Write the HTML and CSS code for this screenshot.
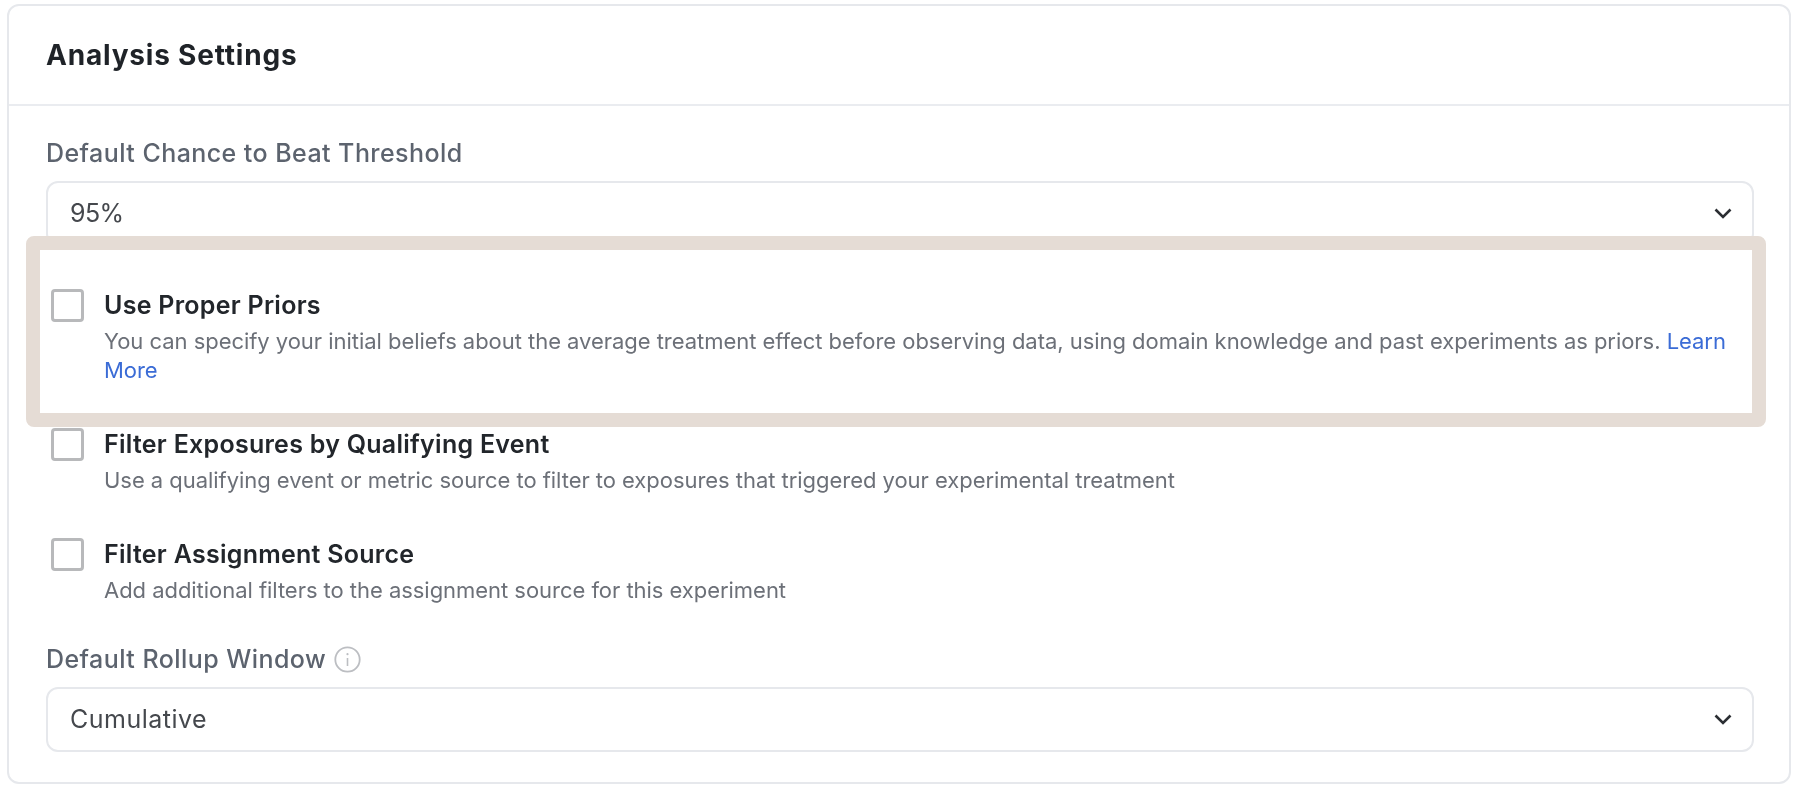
FILE: index.html
```html
<!DOCTYPE html>
<html>
<head>
  <meta charset="utf-8">
  <meta name="viewport" content="width=device-width, initial-scale=1">
  <title>Analysis Settings</title>
  <link rel="stylesheet" href="styles.css">
</head>
<body>
  <div class="card">
    <div class="cardHeader">
      <h2 class="cardTitle">Analysis Settings</h2>
    </div>
    <div class="cardBody">
      <div class="fieldLabel">Default Chance to Beat Threshold</div>
      <div class="selectBox">
        <span class="numValue">95%</span>
        <svg class="chevron" viewBox="0 0 18 11" width="18" height="11"><path d="M1.5 1.5L9 9l7.5-7.5" fill="none" stroke="#2b2e33" stroke-width="2.6"/></svg>
      </div>

      <div class="highlight">
        <div class="checkRow">
          <span class="checkBox"></span>
          <div class="checkText">
            <div class="checkTitle">Use Proper Priors</div>
            <div class="checkDesc">You can specify your initial beliefs about the average treatment effect before observing data, using domain knowledge and past experiments as priors. <a href="#" class="learnLink">Learn More</a></div>
          </div>
        </div>
      </div>

      <div class="checkRow afterHighlight">
        <span class="checkBox"></span>
        <div class="checkText">
          <div class="checkTitle">Filter Exposures by Qualifying Event</div>
          <div class="checkDesc">Use a qualifying event or metric source to filter to exposures that triggered your experimental treatment</div>
        </div>
      </div>

      <div class="checkRow lastCheck">
        <span class="checkBox"></span>
        <div class="checkText">
          <div class="checkTitle">Filter Assignment Source</div>
          <div class="checkDesc">Add additional filters to the assignment source for this experiment</div>
        </div>
      </div>

      <div class="fieldLabel withIcon">
        Default Rollup Window
        <svg class="infoIcon" viewBox="0 0 27 27" width="27" height="27">
          <circle cx="13.5" cy="13.5" r="12.2" fill="none" stroke="#bcbec2" stroke-width="1.8"/>
          <path d="M13.5 12v8" stroke="#bcbec2" stroke-width="1.6"/>
          <circle cx="13.5" cy="8.2" r="1.1" fill="#bcbec2"/>
        </svg>
      </div>
      <div class="selectBox">
        <span>Cumulative</span>
        <svg class="chevron" viewBox="0 0 18 11" width="18" height="11"><path d="M1.5 1.5L9 9l7.5-7.5" fill="none" stroke="#2b2e33" stroke-width="2.6"/></svg>
      </div>
    </div>
  </div>
</body>
</html>
```

FILE: styles.css
```css
body {
  margin: 0;
  padding: 4px 7px 0;
  background-color: #fff;
  font-family: Inter, "Liberation Sans", sans-serif;
}

.card {
  border: 2px solid #e6e8ec;
  border-radius: 12px;
  background-color: #fff;
  filter: blur(0.4px);
}

.cardHeader {
  display: flex;
  align-items: center;
  height: 98px;
  padding: 0 37px;
  border-bottom: 2px solid #eaecf0;
}

.cardTitle {
  margin: 0;
  font-size: 28px;
  font-weight: 650;
  letter-spacing: 0.8px;
  color: #1f2328;
}

.cardBody {
  padding: 31px 35px 30px 37px;
}

.fieldLabel {
  height: 32px;
  margin-bottom: 12px;
  font-size: 25px;
  line-height: 32px;
  font-weight: 500;
  letter-spacing: 0.44px;
  color: #5c636e;
}

.withIcon {
  display: flex;
  align-items: center;
  gap: 8px;
}

.selectBox {
  display: flex;
  align-items: center;
  justify-content: space-between;
  box-sizing: border-box;
  height: 65px;
  padding: 0 20px 2px 22px;
  border: 2px solid #e6e8ec;
  border-radius: 12px;
  font-size: 25px;
  letter-spacing: 0.5px;
  color: #45484d;
}

.chevron {
  margin-top: 2px;
}

.numValue {
  letter-spacing: -0.6px;
}

.highlight {
  position: relative;
  margin: -10px -12px 0 -20px;
  padding: 39px 0 28px 11px;
  border: 14px solid #e5dcd5;
  border-radius: 8px;
  background-color: #fff;
}

.checkRow {
  display: flex;
  gap: 20px;
}

.afterHighlight {
  margin-top: 1px;
  padding-left: 5px;
}

.lastCheck {
  margin-top: 43px;
  margin-bottom: 38px;
  padding-left: 5px;
}

.checkBox {
  flex: none;
  box-sizing: border-box;
  width: 33px;
  height: 33px;
  border: 3px solid #b8b9bb;
  border-radius: 4px;
}

.checkTitle {
  font-size: 25px;
  line-height: 32px;
  font-weight: 600;
  letter-spacing: 0.27px;
  color: #22262b;
}

.checkDesc {
  margin-top: 6px;
  font-size: 22px;
  line-height: 29px;
  letter-spacing: -0.04px;
  color: #6c7078;
}

.learnLink {
  color: #3b6cd6;
  text-decoration: none;
}
```
